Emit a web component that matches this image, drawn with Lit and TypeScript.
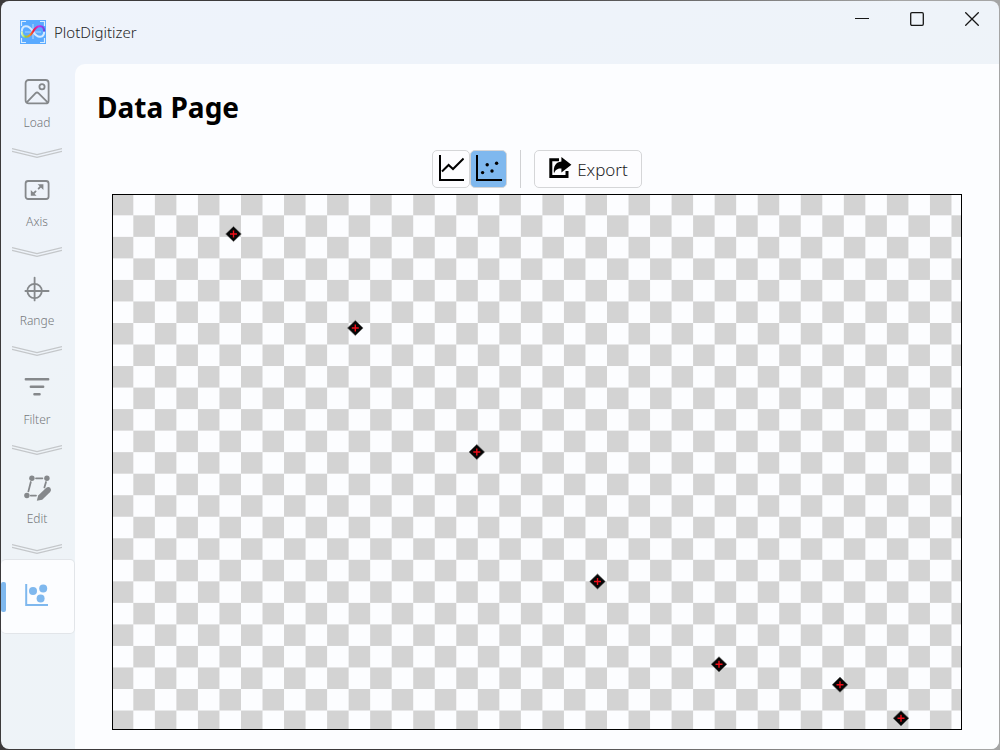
import { LitElement, html, svg, css } from "lit";
import { customElement, state } from "lit/decorators.js";

interface Step {
  id: string;
  label: string;
  icon: unknown;
}

const steps: Step[] = [
  {
    id: "load",
    label: "Load",
    icon: svg`<rect x="1.6" y="1" width="23" height="23.4" rx="3"/><circle cx="18" cy="7.8" r="2.6"/><path d="M3 23.2L11.6 14.2Q13 12.8 14.4 14.2L23.4 23.2"/>`,
  },
  {
    id: "axis",
    label: "Axis",
    icon: svg`<rect x="1.6" y="3" width="23" height="18" rx="2.5"/><path d="M14.6 10.6L17 8.2M11.6 13.4L9 16"/><path class="solid" d="M13.6 6.2H19.4V12ZM6.8 12V17.8H12.6Z"/>`,
  },
  {
    id: "range",
    label: "Range",
    icon: svg`<circle cx="10.6" cy="14" r="7.2"/><path d="M1.4 14H24.6M10.6 .6V23.4"/>`,
  },
  {
    id: "filter",
    label: "Filter",
    icon: svg`<path class="bold" d="M1.8 3.3H24.2M6.8 10.7H19.2M10.4 18.2H15.6"/>`,
  },
  {
    id: "edit",
    label: "Edit",
    icon: svg`<path d="M12 3.3H18.4M6.8 7L4.4 16.4M6.8 20.6H12M22 7L20.4 12.4"/><g class="solid"><circle cx="7.9" cy="3.3" r="2.7"/><circle cx="22.9" cy="3.3" r="2.7"/><circle cx="2.9" cy="20.5" r="2.7"/><path d="M12.8 25.8L14.2 20.4L22 13Q24.4 11.2 26.2 12.8Q27.8 14.8 26.2 17L18.2 24.8Z"/></g>`,
  },
];

const points = [
  [120.5, 39],
  [242.3, 133],
  [363.8, 257],
  [484.5, 386.5],
  [606, 469.3],
  [727, 489.7],
  [788, 523.3],
];

@customElement("app-root")
export class AppRoot extends LitElement {
  static styles = css`
    :host {
      display: block;
      height: 100vh;
      box-sizing: border-box;
      padding: 1px;
      background: linear-gradient(90deg, #3c3a3b 50%, #a5a5a5 90%);
      font-family: "Noto Sans", "Open Sans", sans-serif;
      font-weight: 350;
      color: #1f1f1f;
    }
    * {
      box-sizing: border-box;
    }
    button {
      font: inherit;
      color: inherit;
      padding: 0;
      border: 0;
      background: none;
    }
    svg {
      display: block;
      flex: none;
    }
    .window {
      height: 100%;
      display: grid;
      grid-template: 63px 1fr / 74px 1fr;
      border-radius: 8px;
      overflow: hidden;
      background: linear-gradient(165deg, #eef3fc, #eef3f7 45%, #eef3f8);
    }
    .titlebar {
      grid-column: 1 / -1;
      display: flex;
      justify-content: space-between;
    }
    .brand {
      display: flex;
      align-items: center;
      gap: 8px;
      padding: 0 0 2px 19px;
      font-size: 15px;
      line-height: 24px;
    }
    .controls {
      display: flex;
      align-items: flex-start;
    }
    .control {
      width: 55px;
      height: 36px;
      display: grid;
      place-items: center;
    }
    .nav {
      display: flex;
      flex-direction: column;
    }
    .step {
      height: 75px;
      display: flex;
      flex-direction: column;
      align-items: center;
      padding: 15px 2px 0 0;
      gap: 9px;
      font-size: 12px;
      line-height: 18px;
      color: #75787b;
    }
    .step svg {
      fill: none;
      stroke: #85888b;
      stroke-width: 1.8;
      stroke-linecap: round;
    }
    .step .solid {
      fill: #85888b;
      stroke: none;
    }
    .step .bold {
      stroke-width: 2.4;
    }
    .chevron {
      height: 24px;
      display: flex;
      justify-content: center;
      align-items: center;
      padding: 4px 2px 0 0;
    }
    .current {
      height: 75px;
      display: flex;
      align-items: center;
      gap: 19px;
      border: 1px solid #e2e5e9;
      border-left: 0;
      border-radius: 5px;
      background: #fcfdff;
    }
    .current::before {
      content: "";
      width: 5px;
      height: 30px;
      border-radius: 2px;
      background: #7fb8ee;
    }
    .current svg {
      margin-bottom: 3px;
    }
    .page {
      display: flex;
      flex-direction: column;
      min-width: 0;
      min-height: 0;
      padding: 22px 37px 19px;
      border-top-left-radius: 10px;
      background: #fcfdff;
    }
    h1 {
      margin: 0 -15px 22px;
      font-size: 28px;
      line-height: 42px;
      font-weight: 700;
      color: #000;
    }
    .toolbar {
      display: flex;
      justify-content: center;
      margin-bottom: 6px;
    }
    .tool {
      width: 38px;
      height: 38px;
      display: grid;
      place-items: center;
      border: 1px solid #d5d6d8;
      border-radius: 5px;
      background: #fdfdff;
    }
    .tool svg {
      margin-bottom: 2px;
    }
    .tool[aria-pressed="true"] {
      width: 37px;
      background: #7fb8ee;
    }
    .divider {
      width: 1px;
      margin: 0 13px;
      background: #d0d1d3;
    }
    .export {
      height: 38px;
      display: flex;
      align-items: center;
      gap: 5px;
      padding: 0 13px;
      border: 1px solid #d5d6d8;
      border-radius: 5px;
      background: #fdfdff;
      font-size: 17px;
    }
    .export svg {
      margin-bottom: 2px;
    }
    .plot {
      flex: 1;
      min-height: 0;
      border: 1px solid #000;
      overflow: hidden;
    }
    .plot svg {
      width: 100%;
      height: 100%;
    }
  `;

  @state() private mode: "line" | "scatter" = "scatter";

  private logo() {
    return html`<svg width="26" height="24" viewBox="0 0 26 24" fill="none" aria-hidden="true">
      <defs>
        <linearGradient id="curve" gradientUnits="userSpaceOnUse" x1="1" y1="0" x2="25" y2="0">
          <stop offset="0" stop-color="#e9fbdc" />
          <stop offset=".18" stop-color="#8fd43a" />
          <stop offset=".36" stop-color="#f59a1c" />
          <stop offset=".52" stop-color="#f01d3a" />
          <stop offset=".74" stop-color="#d42bea" />
          <stop offset="1" stop-color="#5b4be0" />
        </linearGradient>
      </defs>
      <rect width="26" height="24" fill="#5aaaff" />
      <path d="M1.5 6V1.5H6M20 1.5H24.5V6M24.5 18V22.5H20M6 22.5H1.5V18" stroke="#d9ecff" stroke-width="1.2" />
      <path d="M13 4V19M5 12H21" stroke="#a9d3ff" stroke-width="1.2" />
      <path d="M1.8 11.5C1.8 5 8.5 4 13 11.5S24.2 18 24.2 11.5" stroke="#d5eaff" stroke-width="2" />
      <path d="M1.8 11.5C1.8 18 8.5 19 13 11.5S24.2 5 24.2 11.5" stroke="url(#curve)" stroke-width="2.2" />
    </svg>`;
  }

  private chevron() {
    return html`<div class="chevron">
      <svg width="50" height="12" viewBox="0 0 50 12" fill="none" stroke="#c4c7ca" stroke-width="1.4" aria-hidden="true">
        <path d="M0 1.6L25 7.6L50 1.6M0 4.4L25 10.4L50 4.4" />
      </svg>
    </div>`;
  }

  private marks() {
    if (this.mode === "line") {
      return svg`<polyline fill="none" stroke="#000" stroke-width="2" points=${points.map((p) => p.join(",")).join(" ")} />`;
    }
    return points.map(
      ([x, y]) => svg`<g transform="translate(${x} ${y})">
        <path d="M0 -7.6L7.8 0L0 7.6L-7.8 0Z" fill="#060606" stroke="#666" stroke-width=".6" />
        <path d="M-3.5 0H3.5M0 -3.5V3.5" stroke="#f00e18" stroke-width="1.4" />
      </g>`
    );
  }

  render() {
    return html`<div class="window">
      <header class="titlebar">
        <div class="brand">${this.logo()}<span>PlotDigitizer</span></div>
        <div class="controls">
          <button class="control" aria-label="Minimize">
            <svg width="14" height="14" viewBox="0 0 14 14" stroke="#161616"><path d="M0 6.5H14" /></svg>
          </button>
          <button class="control" aria-label="Maximize">
            <svg width="14" height="14" viewBox="0 0 14 14" fill="none" stroke="#161616" stroke-width="1.3">
              <rect x=".7" y=".7" width="12.6" height="12.6" rx="1.2" />
            </svg>
          </button>
          <button class="control" aria-label="Close">
            <svg width="14" height="14" viewBox="0 0 14 14" stroke="#161616" stroke-width="1.3">
              <path d="M.3 .3L13.7 13.7M13.7 .3L.3 13.7" />
            </svg>
          </button>
        </div>
      </header>
      <nav class="nav" aria-label="Steps">
        ${steps.map(
          (s) => html`<button class="step">
              <svg width="26" height="26" viewBox="0 0 26 26" overflow="visible" aria-hidden="true">${s.icon}</svg>
              <span>${s.label}</span>
            </button>
            ${this.chevron()}`
        )}
        <button class="current" aria-label="Data" aria-current="page">
          <svg width="24" height="24" viewBox="0 0 24 24" fill="#7fb8ee" aria-hidden="true">
            <path d="M1.2 1V22H23" fill="none" stroke="#7fb8ee" stroke-width="2" />
            <circle cx="8" cy="8" r="4" /><circle cx="18.2" cy="5.6" r="4" /><circle cx="15.6" cy="15.4" r="4" />
          </svg>
        </button>
      </nav>
      <main class="page">
        <h1>Data Page</h1>
        <div class="toolbar">
          <button class="tool" aria-label="Line" aria-pressed=${this.mode === "line"} @click=${() => (this.mode = "line")}>
            <svg width="26" height="26" viewBox="0 0 26 26" fill="none" stroke="#000" stroke-width="2">
              <path d="M2 0V25H26" /><path d="M4 16.5L10.6 10L15 14L25.6 3.5" />
            </svg>
          </button>
          <button class="tool" aria-label="Scatter" aria-pressed=${this.mode === "scatter"} @click=${() => (this.mode = "scatter")}>
            <svg width="26" height="26" viewBox="0 0 26 26">
              <path d="M1 0V25H26" fill="none" stroke="#000" stroke-width="2" />
              <circle cx="6.6" cy="17.6" r="1.7" /><circle cx="11.2" cy="9.8" r="1.7" />
              <circle cx="16" cy="16" r="1.7" /><circle cx="20.6" cy="8.2" r="1.7" />
            </svg>
          </button>
          <div class="divider"></div>
          <button class="export">
            <svg width="24" height="22" viewBox="0 0 24 22" aria-hidden="true">
              <path d="M11 2.7H2.8V19.6H19V14" fill="none" stroke="#000" stroke-width="3" />
              <path d="M13.4 0L23.4 7.8L13.4 15.4V11.4C9.4 11.2 7.4 12.6 6 16.4C5 9 8 5 13.4 4.4Z" stroke="#fff" stroke-width=".8" paint-order="stroke" />
            </svg>
            <span>Export</span>
          </button>
        </div>
        <div class="plot">
          <svg viewBox="0 0 848 534" preserveAspectRatio="none" role="img" aria-label="Extracted data points">
            <defs>
              <pattern id="checker" x="-1.2" y="-1.2" width="43.06" height="43.06" patternUnits="userSpaceOnUse">
                <path d="M0 0H21.53V21.53H0ZM21.53 21.53H43.06V43.06H21.53Z" fill="#d3d3d3" />
              </pattern>
            </defs>
            <rect width="848" height="534" fill="url(#checker)" />
            ${this.marks()}
          </svg>
        </div>
      </main>
    </div>`;
  }
}
